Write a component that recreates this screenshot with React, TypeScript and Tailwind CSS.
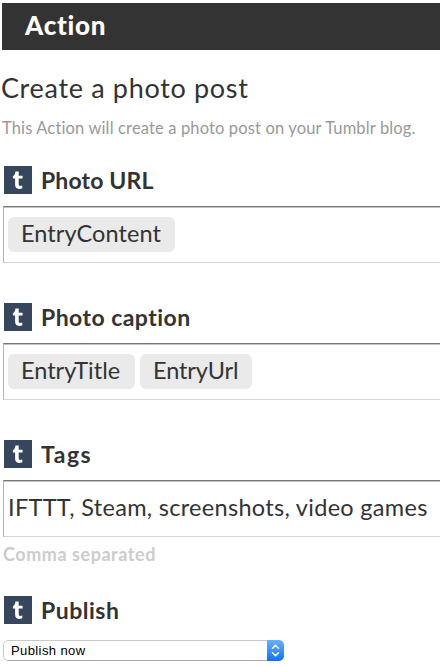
import type { ReactNode } from "react";

function TumblrIcon() {
  return (
    <svg className="block h-7 w-7 shrink-0" viewBox="0 0 28 28">
      <rect width="28" height="28" fill="#36465d" />
      <path
        d="M11.4 5.6h3.3v4.1h3.9v2.7h-3.9v5.3c0 1.6.4 2.2 1.6 2.2.7 0 1.3-.2 2-.5v2.8c-1 .5-2 .7-3.2.7-2.6 0-4-1.4-4-4.1v-6.4H8.9v-2.2c1.6-.6 2.3-2.2 2.5-4.6Z"
        fill="#fff"
      />
    </svg>
  );
}

function Label({ children, spacing }: { children: ReactNode; spacing: string }) {
  return (
    <div className="flex h-7 items-center pl-1">
      <TumblrIcon />
      <h3 className={`ml-[9px] whitespace-nowrap text-[23px] font-bold leading-7 ${spacing}`}>{children}</h3>
    </div>
  );
}

function Field({ children }: { children: ReactNode }) {
  return (
    <div className="ml-[3px] mt-3 h-[57px] border-b border-l border-t border-b-[#d5d5d5] border-l-[#b5b5b5] border-t-[#777]">
      <div className="flex h-full gap-[5px] border-t border-t-[#c4c4c4] pl-1 pt-[9px]">{children}</div>
    </div>
  );
}

function Token({ children, size }: { children: ReactNode; size: string }) {
  return (
    <span className={`flex h-[35px] whitespace-nowrap rounded-md bg-[#eaeaea] pl-[13px] text-[23.5px] leading-[33px] ${size}`}>
      {children}
    </span>
  );
}

export default function App() {
  return (
    <main className="h-[666px] w-[440px] overflow-hidden bg-white pt-[3px] font-[Lato,sans-serif] text-[#333]">
      <header className="ml-0.5 h-[47px] bg-[#333] pl-[23px]">
        <h1 className="text-[26px] font-black leading-[45px] tracking-[0.75px] text-white">
          <span>Action</span>
        </h1>
      </header>
      <h2 className="ml-px mt-5 h-9 whitespace-nowrap text-[27px] leading-9 tracking-[0.67px]">
        <span>Create a photo post</span>
      </h2>
      <p className="ml-0.5 mt-3 h-5 whitespace-nowrap text-[16.5px] leading-5 tracking-[0.14px] text-[#999]">
        <span>This Action will create a photo post on your Tumblr blog.</span>
      </p>

      <section className="mt-7 h-[137px]">
        <Label spacing="tracking-[0.15px]">Photo URL</Label>
        <Field>
          <Token size="w-[167px] tracking-[0.07px]">EntryContent</Token>
        </Field>
      </section>
      <section className="h-[137px]">
        <Label spacing="tracking-[0.46px]">Photo caption</Label>
        <Field>
          <Token size="w-[127px] tracking-[0px] [font-variant-ligatures:none]">EntryTitle</Token>
          <Token size="w-28 tracking-[-0.1px]">EntryUrl</Token>
        </Field>
      </section>
      <section className="h-[156px]">
        <Label spacing="tracking-[1.5px]">Tags</Label>
        <Field>
          <span className="whitespace-nowrap text-[23.5px] leading-[33px] tracking-[0.3px]">
            IFTTT, Steam, screenshots, video games
          </span>
        </Field>
        <p className="ml-[3px] mt-[5px] h-6 text-[18px] font-bold leading-6 tracking-[0.55px] text-[#ccc]">
          <span>Comma separated</span>
        </p>
      </section>
      <section>
        <Label spacing="tracking-[0.5px]">Publish</Label>
        <button className="ml-[3px] mt-4 flex h-[21px] w-[281px] overflow-hidden rounded-[5px] font-['Liberation_Sans',Arial,sans-serif] text-black">
          <span className="h-[21px] flex-1 rounded-l-[5px] border border-r-0 border-[#c8c8c8] border-b-[#aaa] pl-[7px] text-left text-[13px] leading-[19px] tracking-[0.4px]">
            Publish now
          </span>
          <span className="flex h-[21px] w-[17px] items-center justify-center bg-linear-to-b from-[#67b1fa] to-[#126df8]">
            <svg className="h-[13px] w-[9px]" viewBox="0 0 9 13" fill="none" stroke="#fff" strokeWidth="1.5" strokeLinecap="round" strokeLinejoin="round">
              <path d="M1.5 4.3 4.5 1.4 7.5 4.3M1.5 8.7 4.5 11.6 7.5 8.7" />
            </svg>
          </span>
        </button>
      </section>
    </main>
  );
}
